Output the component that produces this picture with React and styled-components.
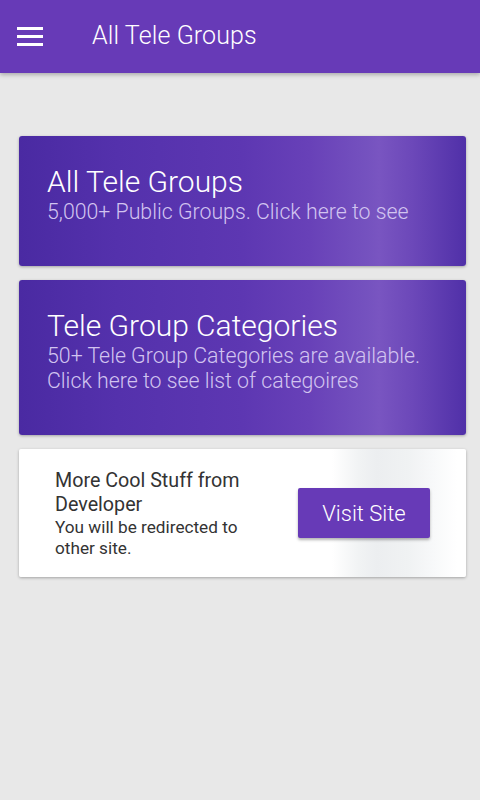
import React from "react";
import styled, { createGlobalStyle } from "styled-components";

const Global = createGlobalStyle`
  html, body {
    margin: 0;
    padding: 0;
    background: #e8e8e8;
    font-family: Roboto, "Noto Sans", sans-serif;
  }
`;

const Screen = styled.div`
  width: 480px;
  min-height: 800px;
  background: #e8e8e8;
`;

const AppBar = styled.header`
  height: 73px;
  background: #673ab7;
  display: flex;
  align-items: center;
  box-shadow: 0 2px 4px rgba(0, 0, 0, 0.25);
  color: #fff;
`;

const MenuButton = styled.div`
  width: 26px;
  margin-left: 17px;
  margin-right: 49px;
  display: flex;
  flex-direction: column;
  gap: 5px;
  span {
    height: 3px;
    background: #fff;
    display: block;
  }
`;

const BarTitle = styled.h1`
  margin: 0;
  font-size: 25px;
  font-weight: 300;
  letter-spacing: 0.1px;
  padding-bottom: 2px;
`;

const Content = styled.main`
  padding: 63px 14px 0 19px;
  display: flex;
  flex-direction: column;
  gap: 14px;
`;

const PurpleCard = styled.div`
  height: ${(p) => p.$h}px;
  box-sizing: border-box;
  padding: ${(p) => p.$pt}px 12px 0 28px;
  border-radius: 3px;
  color: #fff;
  background: linear-gradient(
    90deg,
    #4a2aa2 0%,
    #5431ac 22%,
    #5d37b2 50%,
    #6841b8 65%,
    #7552bf 78%,
    #7955c1 80.5%,
    #6c48b9 88%,
    #5030a8 100%
  );
  box-shadow: 0 1px 3px rgba(0, 0, 0, 0.3);
  cursor: pointer;
`;

const CardTitle = styled.div`
  font-size: 30px;
  font-weight: 300;
  line-height: 35px;
`;

const CardText = styled.div`
  font-size: 21.3px;
  font-weight: 300;
  line-height: 25px;
  color: #d2c4f0;
`;

const PromoCard = styled.div`
  height: 128px;
  box-sizing: border-box;
  display: flex;
  align-items: center;
  padding: 0 36px 0 36px;
  border-radius: 2px;
  background: linear-gradient(
    90deg,
    #ffffff 0%,
    #ffffff 70%,
    #f1f3f4 76%,
    #eceef0 80%,
    #f0f2f3 87%,
    #f8f9fa 93%,
    #ffffff 98%
  );
  box-shadow: 0 1px 3px rgba(0, 0, 0, 0.3);
`;

const PromoText = styled.div`
  flex: 1;
  color: #333;
  padding-top: 2px;
`;

const PromoTitle = styled.div`
  font-size: 19.7px;
  line-height: 24px;
`;

const PromoSub = styled.div`
  font-size: 17.2px;
  line-height: 21.5px;
`;

const VisitButton = styled.button`
  width: 132px;
  height: 50px;
  margin-top: 0;
  border: none;
  border-radius: 2px;
  background: #673ab7;
  color: #fff;
  font-family: Roboto, sans-serif;
  font-size: 22px;
  font-weight: 300;
  box-shadow: 0 2px 3px rgba(0, 0, 0, 0.3);
  cursor: pointer;
`;

export default function App() {
  return (
    <Screen>
      <Global />
      <AppBar>
        <MenuButton>
          <span />
          <span />
          <span />
        </MenuButton>
        <BarTitle>All Tele Groups</BarTitle>
      </AppBar>
      <Content>
        <PurpleCard $h={130} $pt={28}>
          <CardTitle>All Tele Groups</CardTitle>
          <CardText>5,000+ Public Groups. Click here to see</CardText>
        </PurpleCard>
        <PurpleCard $h={155} $pt={28}>
          <CardTitle>Tele Group Categories</CardTitle>
          <CardText>
            50+ Tele Group Categories are available.
            <br />
            Click here to see list of categoires
          </CardText>
        </PurpleCard>
        <PromoCard>
          <PromoText>
            <PromoTitle>
              More Cool Stuff from
              <br />
              Developer
            </PromoTitle>
            <PromoSub>
              You will be redirected to
              <br />
              other site.
            </PromoSub>
          </PromoText>
          <VisitButton>Visit Site</VisitButton>
        </PromoCard>
      </Content>
    </Screen>
  );
}
